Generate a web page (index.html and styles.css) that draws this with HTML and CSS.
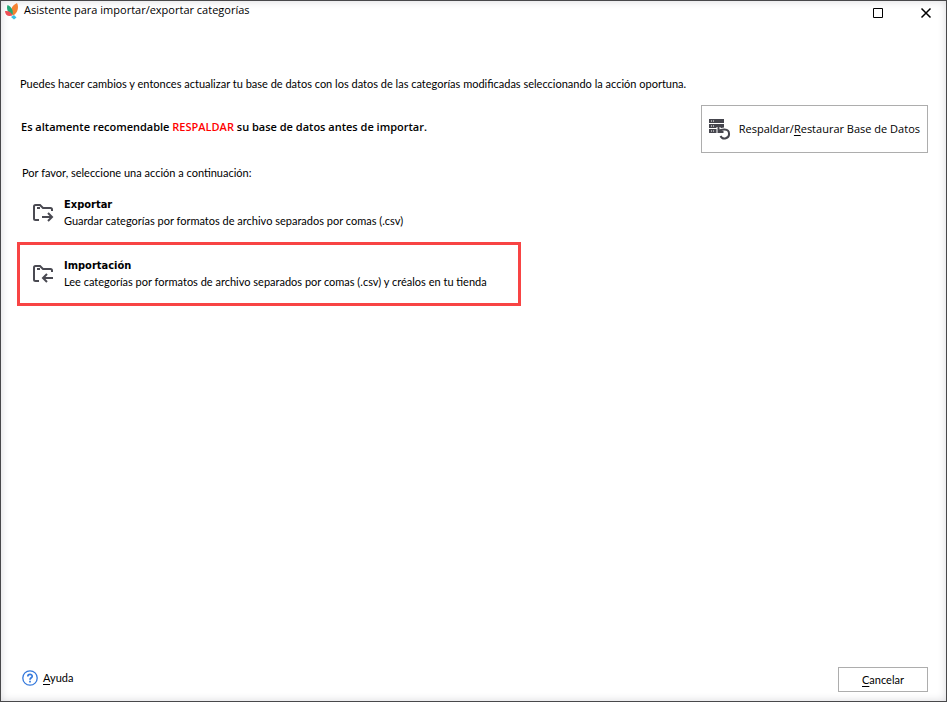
FILE: index.html
```html
<!DOCTYPE html>
<html lang="es">
<head>
<meta charset="utf-8">
<title>Asistente para importar/exportar categorías</title>
<link rel="stylesheet" href="styles.css">
</head>
<body>
<div class="window">
  <header class="titlebar">
    <svg class="logo" width="14" height="18" viewBox="0 0 14 18" aria-hidden="true">
      <path fill="#f58233" d="M12 1C14 5 13 11 8 13.500C4.500 9 6 4 12 1Z"/>
      <path fill="#22a878" d="M2.500 3C7 5 8.500 9 7.500 13C3 11.500 1 7 2.500 3Z"/>
      <path fill="#ee4f55" d="M0 9C4 8.500 6.500 10.500 7.500 13.500C3 15 0 13 0 9Z"/>
      <path fill="#36bfe6" d="M6 15L9 13L11.500 15.500L9 17.500Z"/>
    </svg>
    <h1 class="title">Asistente para importar/exportar categorías</h1>
    <div class="controls">
      <button class="control" type="button" aria-label="Maximizar">
        <svg width="12" height="12" viewBox="0 0 12 12"><path d="M1.500 1.500h9v9h-9z" fill="none" stroke="#000"/></svg>
      </button>
      <button class="control" type="button" aria-label="Cerrar">
        <svg width="12" height="12" viewBox="0 0 12 12"><path d="M1.500 1.500l9 9M10.500 1.500l-9 9" fill="none" stroke="#000" stroke-width="1.500"/></svg>
      </button>
    </div>
  </header>
  <main class="content">
    <p class="intro">Puedes hacer cambios y entonces actualizar tu base de datos con los datos de las categorías modificadas seleccionando la acción oportuna.</p>
    <div class="backup">
      <p class="warning">Es altamente recomendable <span class="alert">RESPALDAR</span> su base de datos antes de importar.</p>
      <button class="button button-backup" type="button">
        <svg width="22" height="22" viewBox="0 0 22 22" aria-hidden="true">
          <path fill="#45454d" d="M0 1h15v4H0zM0 6h15v4H0zM0 11h8v4H0z"/>
          <path stroke="#fff" fill="none" d="M2 3h1M4 3h1M2 8h1M4 8h1M2 13h1M4 13h1"/>
          <path fill="none" stroke="#fff" stroke-width="4" d="M9.500 13.500C12 11 20 10 20 15.500A4.500 4.500 0 0 1 11.500 18M9.500 9v5h5"/>
          <path fill="none" stroke="#45454d" stroke-width="2" d="M9.500 13.500C12 11 20 10 20 15.500A4.500 4.500 0 0 1 11.500 18M9.500 9v5h5"/>
        </svg>
        <span>Respaldar/<u>R</u>estaurar Base de Datos</span>
      </button>
    </div>
    <p class="prompt">Por favor, seleccione una acción a continuación:</p>
    <div class="actions">
      <button class="action" type="button">
        <svg class="folder" width="22" height="20" viewBox="0 0 22 20" aria-hidden="true">
          <path d="M7 17H3.500Q2 17 2 15.500V3.500Q2 2 3.500 2H8l3 3h7.500Q20 5 20 6.500V8M5 5h3M10 14h10M16 10l4 4-4 4"/>
        </svg>
        <span class="label"><strong>Exportar</strong><span>Guardar categorías por formatos de archivo separados por comas (.csv)</span></span>
      </button>
      <button class="action selected" type="button">
        <svg class="folder" width="22" height="20" viewBox="0 0 22 20" aria-hidden="true">
          <path d="M7 17H3.500Q2 17 2 15.500V3.500Q2 2 3.500 2H8l3 3h7.500Q20 5 20 6.500V8M5 5h3M21 14H11M15 10l-4 4 4 4"/>
        </svg>
        <span class="label"><strong>Importación</strong><span>Lee categorías por formatos de archivo separados por comas (.csv) y créalos en tu tienda</span></span>
      </button>
    </div>
  </main>
  <footer class="footer">
    <a class="help" href="#ayuda">
      <svg width="16" height="16" viewBox="0 0 16 16" aria-hidden="true" fill="none" stroke="#3579dc">
        <circle cx="8" cy="8" r="7.200" stroke-width="1.300"/>
        <path stroke-width="1.700" d="M5.800 6.500C5.800 3.500 10.300 3.800 10.200 6.200C10.200 7.800 8 7.700 8 9.800M8 10.800v1.600"/>
      </svg>
      <span><u>A</u>yuda</span>
    </a>
    <button class="button button-cancel" type="button"><span><u>C</u>ancelar</span></button>
  </footer>
</div>
</body>
</html>
```
FILE: styles.css
```css
* { box-sizing: border-box; }
body {
  margin: 0;
  font-family: Lato, sans-serif;
  font-size: 11px;
  line-height: 16px;
  color: #000;
}
h1, p { margin: 0; font-size: inherit; font-weight: normal; }
button { font: inherit; color: inherit; cursor: pointer; }
svg { display: block; flex: none; }
u { text-underline-offset: 2px; }
.window {
  display: flex;
  flex-direction: column;
  min-height: 100vh;
  border: 1px solid #48484a;
  background: #fff;
  box-shadow: inset 0 0 8px #d8d8dc;
}
.titlebar { display: flex; align-items: flex-start; padding: 1px 8px 0 4px; }
.title, .warning, .button-backup { font-family: "Open Sans", sans-serif; }
.title { margin-left: 5px; }
.controls { display: flex; gap: 24px; margin-left: auto; }
.control {
  display: grid;
  place-items: center;
  width: 24px;
  height: 22px;
  padding: 0;
  border: 0;
  background: none;
}
.content { flex: 1; padding: 52px 18px 0 16px; }
.intro { padding-left: 3px; }
.backup { display: flex; align-items: flex-start; justify-content: space-between; margin-top: 13px; }
.warning { padding: 14px 0 0 4px; font-weight: 600; }
.alert { color: #f00; }
.button {
  display: flex;
  align-items: center;
  justify-content: center;
  border: 1px solid #adadad;
  background: #fff;
}
.button-backup { height: 48px; gap: 8px; padding: 0 7px; }
.prompt { margin-top: 12px; padding-left: 5px; }
.actions { display: flex; flex-direction: column; align-items: flex-start; }
.action {
  display: flex;
  align-items: center;
  gap: 10px;
  width: 504px;
  max-width: 100%;
  min-height: 64px;
  padding: 0 12px;
  border: 3px solid transparent;
  background: none;
  text-align: left;
}
.action + .action { margin-top: -3px; }
.selected { border-color: #f84444; }
.label { display: flex; flex-direction: column; }
.label strong { font-family: "DejaVu Sans Condensed", "DejaVu Sans", sans-serif; }
.folder { fill: none; stroke: #4a4a52; stroke-width: 2; }
.footer { display: flex; align-items: center; justify-content: space-between; padding: 0 18px 9px 21px; }
.help { display: flex; align-items: center; gap: 5px; padding-bottom: 4px; color: inherit; text-decoration: none; }
.button-cancel { width: 90px; height: 25px; }
```
